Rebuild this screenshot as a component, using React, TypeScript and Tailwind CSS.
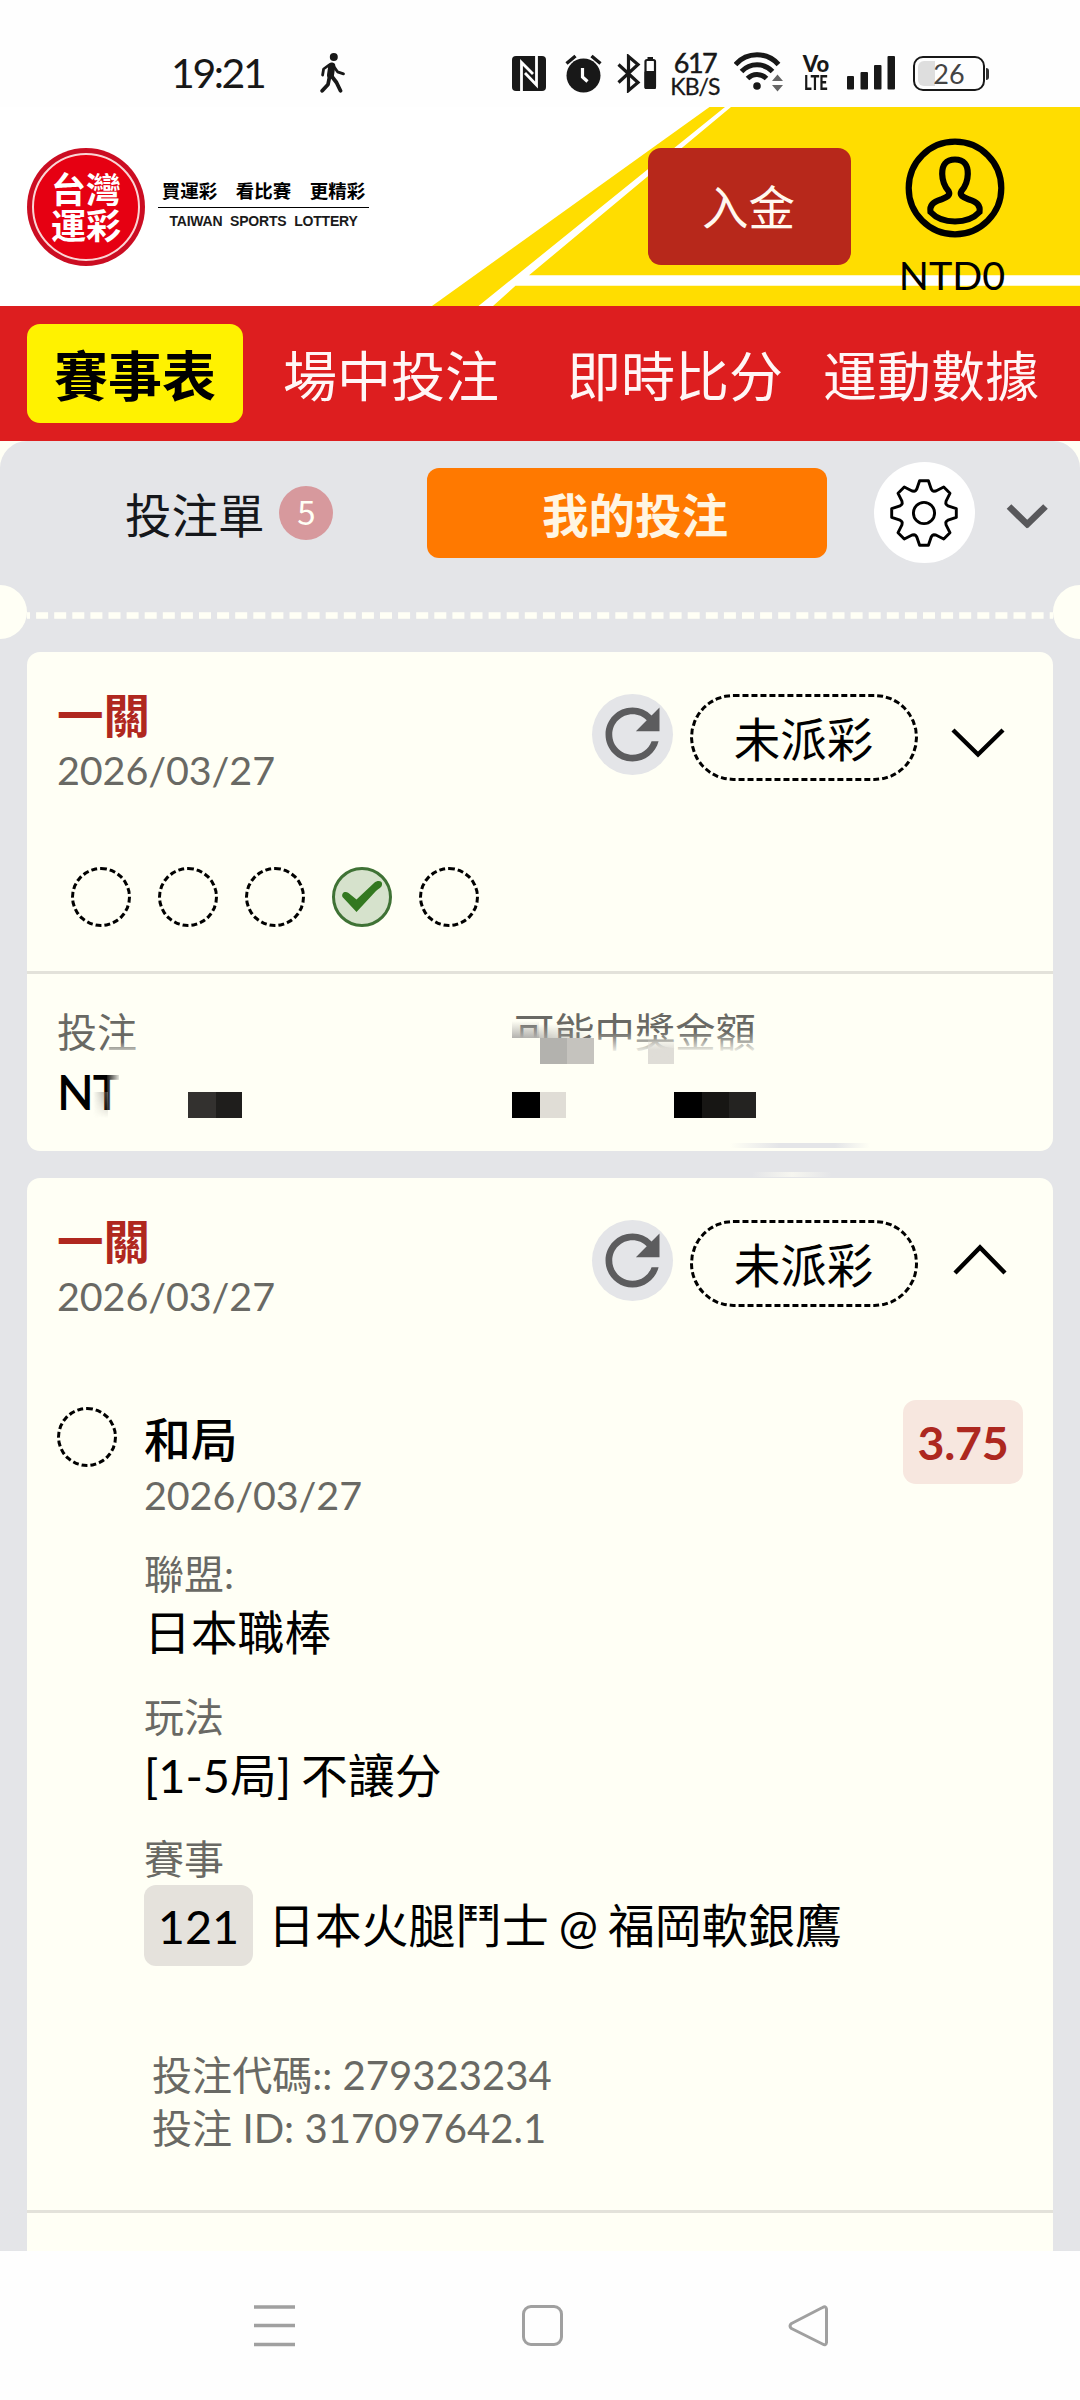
import type { ReactNode } from "react";
import { MdRefresh } from "react-icons/md";

const tabs = [
  { label: "場中投注", className: "ml-[40px]" },
  { label: "即時比分", className: "ml-[68px]" },
  { label: "運動數據", className: "ml-[40px]" },
];

const legs = ["open", "open", "open", "won", "open"];

const details = [
  { label: "聯盟:", value: "日本職棒" },
  { label: "玩法", value: "[1-5局] 不讓分" },
];

// outline of an eight-toothed gear around 0,0
const gearPath = () => {
  const tooth = [
    [-8.6, -22.2],
    [-7.2, -24],
    [-4.4, -32.3],
    [4.4, -32.3],
    [7.2, -24],
    [8.6, -22.2],
  ];
  const points: string[] = [];
  for (let i = 0; i < 8; i++) {
    const a = (i * Math.PI) / 4;
    tooth.forEach(([x, y]) => {
      const px = x * Math.cos(a) - y * Math.sin(a);
      const py = x * Math.sin(a) + y * Math.cos(a);
      points.push(`${px.toFixed(2)} ${py.toFixed(2)}`);
    });
  }
  return `M${points.join("L")}Z`;
};

function StatusBar() {
  return (
    <div className="flex h-[107px] items-start bg-[#fefefe] pt-[50px] text-[#181818]">
      <span className="ml-[171px] w-[95px] text-[41px] leading-[45px] tracking-[-2.4px] whitespace-nowrap">
        19:21
      </span>
      <svg className="mt-[3px] ml-[54px]" width="26" height="40" viewBox="0 0 26 40" fill="none" stroke="#181818" strokeLinecap="round" strokeLinejoin="round">
        <circle cx="13.8" cy="4" r="4" fill="#181818" stroke="none" />
        <path d="M11.8 13L10.5 22" strokeWidth="7" />
        <path d="M13.5 13L17.5 18.8L23.5 20.8M9 12L3.6 16L2.6 22" strokeWidth="2.8" />
        <path d="M11.5 23L16.5 29.5L20.5 37.8M9.5 24L8 31.5L2.2 37.8" strokeWidth="3.8" />
      </svg>

      <svg className="mt-[6px] ml-[166px]" width="34" height="35" viewBox="0 0 34 35">
        <rect width="34" height="35" rx="4" fill="#181818" />
        <path d="M9.5 35V6.5L21 18" fill="none" stroke="#fefefe" strokeWidth="2.8" />
        <path d="M24.5 0V29L13 17" fill="none" stroke="#fefefe" strokeWidth="2.8" />
      </svg>

      <svg className="mt-[4px] ml-[19px]" width="37" height="39" viewBox="0 0 37 39">
        <circle cx="18.5" cy="21.5" r="17" fill="#181818" />
        <path d="M1.5 9.5L10.5 2M35.5 9.5L26.5 2" stroke="#181818" strokeWidth="3.4" />
        <path d="M17.5 14V23L22.5 27.5" fill="none" stroke="#fefefe" strokeWidth="3.2" />
      </svg>

      <svg className="mt-[4px] ml-[15px]" width="40" height="39" viewBox="0 0 40 39">
        <path d="M1.5 10.5L21 28.5L11.5 36.5V2.5L21 10.5L1.5 28.5" fill="none" stroke="#181818" strokeWidth="3.2" />
        <rect x="28.5" y="6" width="9.5" height="28" rx="1.5" fill="none" stroke="#181818" strokeWidth="2.2" />
        <rect x="27.5" y="17" width="11.5" height="18" rx="1.5" fill="#181818" />
        <rect x="30.5" y="3" width="5.5" height="3" fill="#181818" />
      </svg>

      <div className="ml-[13px] flex w-[50px] flex-col items-center whitespace-nowrap">
        <span className="text-[27px] leading-[26px] tracking-[-1.5px] [-webkit-text-stroke:0.5px_#181818]">617</span>
        <span className="text-[23px] leading-[20px] tracking-[-0.9px] [-webkit-text-stroke:0.3px_#181818]">KB/S</span>
      </div>

      <svg className="mt-[2px] ml-[14px]" width="50" height="40" viewBox="0 0 50 40">
        <g fill="none" stroke="#181818" strokeWidth="5">
          <path d="M1.5 12.5C13 -0.5 33 -0.5 44.5 12.5" />
          <path d="M7.5 19.5C16 10.5 30 10.5 38.5 19.5" />
          <path d="M13.5 26.5C19 21 27 21 32.5 26.5" />
        </g>
        <circle cx="23" cy="34" r="3.8" fill="#181818" />
        <path d="M38 29L43.5 22.5L49 29ZM38 33L43.5 39.5L49 33Z" fill="#666" />
      </svg>

      <div className="mt-[4px] ml-[15px] flex w-[34px] flex-col items-center font-black">
        <span className="text-[22px] leading-[19px]">Vo</span>
        <span className="scale-x-[0.7] text-[21px] leading-[18px]">LTE</span>
      </div>

      <svg className="mt-[6px] ml-[14px]" width="48" height="34" viewBox="0 0 48 34" fill="#181818">
        <rect y="20" width="7" height="13.5" rx="1" />
        <rect x="13.5" y="16" width="7.5" height="17.5" rx="1" />
        <rect x="27" y="9" width="7.5" height="24.5" rx="1" />
        <rect x="40.5" width="7.5" height="33.5" rx="1" />
      </svg>

      <div className="mt-[6px] ml-[18px] flex items-center">
        <div className="relative flex h-[35px] w-[72px] items-center justify-center rounded-[10px] border-[2.5px] border-[#181818]">
          <div className="absolute top-[3px] left-[3px] h-[25px] w-[17px] rounded-l-[6px] bg-[#dedede]" />
          <span className="relative text-[27px] leading-[30px] text-[#444]">26</span>
        </div>
        <div className="ml-px h-3 w-[3px] rounded-r bg-[#333]" />
      </div>
    </div>
  );
}

function Header() {
  return (
    <header className="relative flex h-[199px] bg-white">
      <svg className="absolute inset-0" width="1080" height="199" viewBox="0 107 1080 199">
        <path d="M709.5 107H1080V306H432Z" fill="#ffdd00" />
        <path d="M725 107H731L529 275.3H1080V285.7H515.5L493 306H478.5Z" fill="#fff" />
      </svg>

      <div className="relative mt-[41px] ml-[27px] flex h-[118px] w-[118px] items-center justify-center rounded-full bg-[#cb0d22]">
        <div className="flex h-[108px] w-[108px] flex-col items-center justify-center rounded-full border-2 border-[#fbd5d5] bg-[#e60012] text-[35px] leading-[36px] font-bold text-white">
          <span>台灣</span>
          <span>運彩</span>
        </div>
      </div>
      <div className="relative mt-[73px] ml-[13px] flex h-[54px] w-[211px] flex-col items-center text-[#1a1a1a]">
        <span className="text-[18.5px] leading-[23px] font-bold whitespace-pre text-black">買運彩　看比賽　更精彩</span>
        <div className="mt-[4px] h-px w-full bg-black" />
        <span className="mt-[4px] font-['Liberation_Sans'] text-[14px] leading-[18px] font-bold tracking-[-0.2px] whitespace-nowrap [word-spacing:4px]">
          TAIWAN SPORTS LOTTERY
        </span>
      </div>

      <button className="relative mt-[41px] ml-[279px] h-[117px] w-[203px] rounded-[13px] bg-[#b7281b] pr-[2px] text-[46.5px] leading-[119px] text-[#fff8ef]">
        入金
      </button>
      <div className="relative mt-[30px] ml-[49px] flex w-[110px] flex-col items-center text-black">
        <svg width="102" height="102" viewBox="-51 -51 102 102" fill="none" stroke="#000" strokeWidth="6.2">
          <circle r="46.3" />
          <path d="M0 -28.5C-9 -28.5 -13 -23 -12.8 -14C-12.6 -5 -10 -1 -6.5 3C-4 7.5 -8 9 -14 11.5C-22 14 -25.5 17 -24.5 24C-18 31 -9 33.5 0 33.5C9 33.5 18 31 24.5 24C25.5 17 22 14 14 11.5C8 9 4 7.5 6.5 3C10 -1 12.6 -5 12.8 -14C13 -23 9 -28.5 0 -28.5Z" />
        </svg>
        <span className="mt-[11px] pr-[6px] text-[39.5px] leading-[50px]">NTD0</span>
      </div>
    </header>
  );
}

function NavTabs() {
  return (
    <nav className="flex h-[135px] items-center bg-[#dd1e1f] text-[54px] whitespace-nowrap text-[#fff6f6]">
      <span className="ml-[27px] h-[99px] w-[216px] rounded-[13px] bg-[#fff200] text-center leading-[106px] font-bold text-black">
        賽事表
      </span>
      {tabs.map(({ label, className }) => (
        <span key={label} className={`pt-[6px] leading-[80px] ${className}`}>
          {label}
        </span>
      ))}
    </nav>
  );
}

function SlipHeader() {
  return (
    <div className="flex h-[144px] items-start text-[46.5px]">
      <span className="mt-[45px] ml-[125px] leading-[59px] text-[#15171b]">投注單</span>
      <span className="mt-[45px] ml-[14px] h-[54px] w-[54px] rounded-full bg-[#d7999d] pl-[2px] text-center font-['Noto_Sans_CJK_SC'] text-[33px] leading-[51px] text-[#fffff5]">
        5
      </span>
      <button className="mt-[27px] ml-[94px] h-[90px] w-[400px] rounded-[12px] bg-[#ff7900] pl-[17px] text-center leading-[95px] font-bold text-[#fff5e2]">
        我的投注
      </button>
      <div className="mt-[21px] ml-[47px] flex h-[101px] w-[101px] items-center justify-center rounded-full bg-white">
        <svg width="72" height="72" viewBox="-36 -36 72 72" fill="none" stroke="#000" strokeWidth="2.9" strokeLinejoin="round">
          <path d={gearPath()} />
          <circle r="10.6" />
        </svg>
      </div>
      <svg className="mt-[62px] ml-[31px]" width="43" height="26" viewBox="0 0 43 26" fill="none" stroke="#58585b" strokeWidth="6.6">
        <path d="M3 3.5L23 23M39.5 3.5L19.5 23" />
      </svg>
    </div>
  );
}

function TicketEdge() {
  return (
    <div className="flex h-[54px] w-full items-center justify-between">
      <div className="h-[54px] w-[27px] rounded-r-full bg-[#fffff5]" />
      <svg className="mt-1.5" width="1026" height="7" viewBox="27 0 1026 7">
        <path d="M18 3.5H1062" stroke="#fffff5" strokeWidth="6.6" strokeDasharray="12 6.1" />
      </svg>
      <div className="h-[54px] w-[27px] rounded-l-full bg-[#fffff5]" />
    </div>
  );
}

function Leg({ state }: { state: string }) {
  if (state === "won") {
    return (
      <div className="flex h-[60px] w-[60px] items-center justify-center rounded-full border-3 border-[#3f7235] bg-[#d6e2cc]">
        <svg width="44" height="36" viewBox="0 0 44 36">
          <path d="M2.5 18C1 14 5 11.5 8.5 14L16.5 20.5L34 4C38 0.5 43 2 42 6C41.5 8.5 39 9.5 36 12L16.5 33Z" fill="#337820" />
        </svg>
      </div>
    );
  }
  return <div className="h-[60px] w-[60px] shrink-0 rounded-full border-3 border-dashed border-black" />;
}

function BetCard({ open, children, className }: { open?: boolean; children: ReactNode; className: string }) {
  return (
    <section className={`relative mx-[27px] bg-[#fffff5] ${className}`}>
      <div className="flex h-[145px] items-start pl-[30px]">
        <div className="w-[535px] pt-[36px]">
          <h2 className="text-[46.5px] leading-[54px] font-bold text-[#b0281f]">一關</h2>
          <p className="text-[39.5px] leading-[55px] tracking-[-0.1px] text-[#696964]">2026/03/27</p>
        </div>
        <div className="mt-[42px] flex h-[81px] w-[81px] items-center justify-center rounded-full bg-[#e4e5e8]">
          <MdRefresh className="shrink-0 text-[#5c5c5e]" size={81} />
        </div>
        <span className="mt-[42px] ml-[17px] h-[87px] w-[228px] rounded-full border-3 border-dashed border-black pr-[1px] text-center text-[46.5px] leading-[84px] text-black">
          未派彩
        </span>
        {open ? (
          <svg className="mt-[65px] ml-[35px]" width="54" height="32" viewBox="0 0 54 32" fill="none" stroke="#000" strokeWidth="4.4">
            <path d="M2 30L27 4.5L52 30" />
          </svg>
        ) : (
          <svg className="mt-[76px] ml-[33px]" width="54" height="32" viewBox="0 0 54 32" fill="none" stroke="#000" strokeWidth="4.4">
            <path d="M2 2L27 26.5L52 2" />
          </svg>
        )}
      </div>
      {children}
    </section>
  );
}

function Stake() {
  return (
    <div className="relative flex h-[177px] border-t-3 border-[#e3e2da] pt-[31px] pl-[30px]">
      <div className="w-[457px]">
        <p className="text-[40px] leading-[54px] text-[#696964]">投注</p>
        <p className="text-[48px] leading-[66px] font-semibold tracking-[-1px] text-black">NT</p>
      </div>
      <p className="text-[40.3px] leading-[54px] text-[#696964]">可能中獎金額</p>

      {/* redacted amounts */}
      <div className="absolute top-[68px] left-[80px] h-[14px] w-[32px] bg-linear-to-b from-transparent to-[#fffff5]" />
      <div className="absolute top-[118px] left-[66px] h-[26px] w-[15px] bg-linear-to-r from-[#77746f]/0 to-[#77746f]/60 [mask-image:linear-gradient(#000,transparent)]" />
      <div className="absolute top-[98px] left-[80px] h-[50px] w-[12px] bg-linear-to-r from-[#fffff5]/10 to-[#fffff5]/90" />
      <div className="absolute top-[98px] left-[92px] h-[50px] w-[20px] bg-[#fffff5]" />
      <div className="absolute top-[58px] left-[567px] h-[22px] w-[170px] bg-linear-to-b from-[#fffff5]/0 to-[#fffff5]" />
      <div className="absolute top-[64px] left-[485px] h-[26px] w-[84px] bg-[#fffff5]" />
      <div className="absolute top-[47px] left-[485px] h-[17px] w-[27px] bg-linear-to-b from-[#b3b2ae]/0 to-[#b3b2ae]" />
      <div className="absolute top-[50px] left-[512px] h-[14px] w-[54px] bg-linear-to-b from-[#b3b2ae]/0 to-[#b3b2ae]/80 [mask-image:linear-gradient(90deg,#000,transparent)]" />
      <div className="absolute top-[64px] left-[513px] flex h-[26px]">
        <div className="w-[27px] bg-[#b3b2ae]" />
        <div className="w-[27px] bg-[#c5c3be]" />
        <div className="ml-[54px] w-[26px] bg-linear-to-b from-[#dfddd7]/0 to-[#dfddd7] to-45%" />
      </div>
      <div className="absolute top-[118px] left-[161px] flex h-[26px]">
        <div className="w-[28px] bg-[#33312f]" />
        <div className="w-[26px] bg-[#1f1e1c]" />
      </div>
      <div className="absolute top-[118px] left-[485px] flex h-[26px]">
        <div className="w-[28px] bg-black" />
        <div className="w-[26px] bg-[#e0ddd6]" />
        <div className="ml-[108px] w-[28px] bg-black" />
        <div className="w-[27px] bg-[#171614]" />
        <div className="w-[27px] bg-[#242321]" />
      </div>
      <div className="absolute bottom-0 left-[703px] h-[5px] w-[140px] bg-[linear-gradient(90deg,#e4e5e800,#e4e5e8_35%,#e4e5e8_75%,#e4e5e800)]" />
    </div>
  );
}

function Selection() {
  return (
    <div className="mt-[77px] flex h-[813px] items-start border-b-3 border-[#e3e2da] pr-[30px] pl-[30px]">
      <div className="mt-[7px]">
        <Leg state="open" />
      </div>
      <div className="mt-[12px] ml-[27px] text-[46.8px] text-black">
        <h3 className="leading-[55px] font-medium">和局</h3>
        <p className="text-[39.5px] leading-[56px] tracking-[-0.1px] text-[#696964]">2026/03/27</p>
        <div className="flex flex-col gap-[26px] pt-[24px]">
          {details.map(({ label, value }) => (
            <div key={label}>
              <p className="text-[40px] leading-[54px] text-[#696964]">{label}</p>
              <p className="leading-[63px] [word-spacing:-2px]">{value}</p>
            </div>
          ))}
        </div>
        <p className="mt-[26px] text-[40px] leading-[52px] text-[#696964]">賽事</p>
        <div className="flex h-[81px] items-center whitespace-nowrap">
          <span className="h-[81px] w-[109px] rounded-[12px] bg-[#e5e2dc] text-center leading-[82px]">121</span>
          <span className="ml-[15px] leading-[83px] [word-spacing:-2px]">日本火腿鬥士 @ 福岡軟銀鷹</span>
        </div>
        <div className="mt-[82px] ml-[8px] text-[40.1px] leading-[53px] whitespace-nowrap text-[#696964]">
          <p>投注代碼:: 279323234</p>
          <p>投注 ID: 317097642.1</p>
        </div>
      </div>
      <span className="ml-auto h-[84px] w-[120px] shrink-0 rounded-[13px] bg-[#f7e7df] text-center text-[46.5px] leading-[85px] font-bold tracking-[-0.2px] text-[#ad281f]">
        3.75
      </span>
    </div>
  );
}

function SystemNav() {
  return (
    <div className="flex h-[149px] items-start bg-[#fefefe] pt-[54px]">
      <svg className="ml-[254px]" width="41" height="42" viewBox="0 0 41 42" stroke="#a0a0a0" strokeWidth="3.4">
        <path d="M0 2H41M0 20.5H41M0 39.5H41" />
      </svg>
      <div className="ml-[227px] h-[41px] w-[41px] rounded-[9px] border-3 border-[#a0a0a0]" />
      <svg className="ml-[225px]" width="42" height="42" viewBox="0 0 42 42" fill="none" stroke="#a0a0a0" strokeWidth="3" strokeLinejoin="round">
        <path d="M34.5 2.5Q38 0.5 38.5 4V37.5Q38 41 34.5 39L3.5 23.5Q0.5 21 3.5 18.5Z" />
      </svg>
    </div>
  );
}

export default function App() {
  return (
    <div className="h-[2400px] w-[1080px] overflow-hidden bg-[#fffff5] font-[Lato,'Noto_Sans_CJK_SC',sans-serif]">
      <StatusBar />
      <Header />
      <NavTabs />
      <main className="h-[1810px] overflow-hidden rounded-t-[27px] bg-[#e4e5e8]">
        <SlipHeader />
        <TicketEdge />
        <BetCard className="mt-[13px] h-[499px] rounded-[13px]">
          <div className="flex h-[174px] gap-[27px] pt-[70px] pl-[44px]">
            {legs.map((state, index) => (
              <Leg key={index} state={state} />
            ))}
          </div>
          <Stake />
        </BetCard>
        <BetCard open className="mt-[27px] h-[1200px] rounded-t-[13px]">
          <div className="absolute -top-[6px] left-[725px] h-[5px] w-[80px] bg-linear-to-r from-[#f6f6f0]/0 via-[#f6f6f0] to-[#f6f6f0]/0" />
          <Selection />
        </BetCard>
      </main>
      <SystemNav />
    </div>
  );
}
